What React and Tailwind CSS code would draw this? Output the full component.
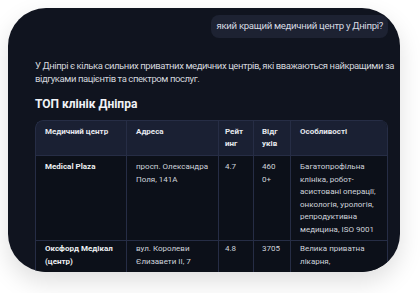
import React from "react";

const font = { fontFamily: "Roboto, 'Noto Sans', sans-serif" };

function Cell({ children, className = "" }) {
  return (
    <div className={"border-l border-t border-[#262d45] px-[9px] " + className}>
      {children}
    </div>
  );
}

export default function App() {
  return (
    <div className="w-[420px] h-[293px] bg-white overflow-hidden" style={font}>
      <div className="ml-[8px] mt-[8px] w-[392px] h-[264px] rounded-[38px] bg-[#10141f] shadow-[0_10px_24px_rgba(0,0,0,0.13)] overflow-hidden">
        <div className="pl-[27px] pr-[12px] pt-[7px]">
          <div className="flex justify-end">
            <div className="bg-[#1d2232] rounded-[8px] h-[23px] px-[5px] flex items-center text-[9.6px] text-[#d7dae2] whitespace-nowrap tracking-[-0.3px]">
              який кращий медичний центр у Дніпрі?
            </div>
          </div>
          <p className="mt-[21px] text-[9.5px] leading-[13px] text-[#d3d6dd] tracking-[-0.42px] whitespace-nowrap">
            У Дніпрі є кілька сильних приватних медичних центрів, які вважаються найкращими за
            <br />
            відгуками пацієнтів та спектром послуг.
          </p>
          <h3 className="mt-[12px] text-[12px] leading-[15px] font-bold text-[#f1f3f7]">
            ТОП клінік Дніпра
          </h3>
          <div className="mt-[8px] w-[353px] rounded-t-[8px] border-r border-[#262d45] overflow-hidden">
            <div className="grid grid-cols-[91px_92px_35px_37px_98px] text-[8px] leading-[12px]">
              <Cell className="bg-[#1a2033] h-[35px] pt-[5px] font-bold text-[#e6e8ee] rounded-tl-[8px]">Медичний центр</Cell>
              <Cell className="bg-[#1a2033] h-[35px] pt-[5px] font-bold text-[#e6e8ee]">Адреса</Cell>
              <Cell className="bg-[#1a2033] h-[35px] pt-[5px] font-bold text-[#e6e8ee] !px-[6px]">Рейт<br />инг</Cell>
              <Cell className="bg-[#1a2033] h-[35px] pt-[5px] font-bold text-[#e6e8ee] !px-[8px]">Відг<br />уків</Cell>
              <Cell className="bg-[#1a2033] h-[35px] pt-[5px] font-bold text-[#e6e8ee]">Особливості</Cell>

              <Cell className="bg-[#0c1019] h-[85px] pt-[5px] leading-[12.6px] font-bold text-[#eef0f4]">Medical Plaza</Cell>
              <Cell className="bg-[#0c1019] h-[85px] pt-[5px] leading-[12.6px] text-[#cfd3db]">просп. Олександра Поля, 141А</Cell>
              <Cell className="bg-[#0c1019] h-[85px] pt-[5px] leading-[12.6px] text-[#cfd3db] !px-[6px]">4.7</Cell>
              <Cell className="bg-[#0c1019] h-[85px] pt-[5px] leading-[12.6px] text-[#cfd3db] !px-[8px]">460<br />0+</Cell>
              <Cell className="bg-[#0c1019] h-[85px] pt-[5px] leading-[12.6px] text-[#cfd3db]">Багатопрофільна клініка, робот-асистовані операції, онкологія, урологія, репродуктивна медицина, ISO 9001</Cell>

              <Cell className="bg-[#0c1019] h-[40px] pt-[2px] leading-[12.6px] font-bold text-[#eef0f4]">Оксфорд Медікал (центр)</Cell>
              <Cell className="bg-[#0c1019] h-[40px] pt-[2px] leading-[12.6px] text-[#cfd3db]">вул. Королеви Єлизавети II, 7</Cell>
              <Cell className="bg-[#0c1019] h-[40px] pt-[2px] leading-[12.6px] text-[#cfd3db] !px-[6px]">4.8</Cell>
              <Cell className="bg-[#0c1019] h-[40px] pt-[2px] leading-[12.6px] text-[#cfd3db] !px-[8px]">3705</Cell>
              <Cell className="bg-[#0c1019] h-[40px] pt-[2px] leading-[12.6px] text-[#cfd3db]">Велика приватна лікарня,</Cell>
            </div>
          </div>
        </div>
      </div>
    </div>
  );
}
